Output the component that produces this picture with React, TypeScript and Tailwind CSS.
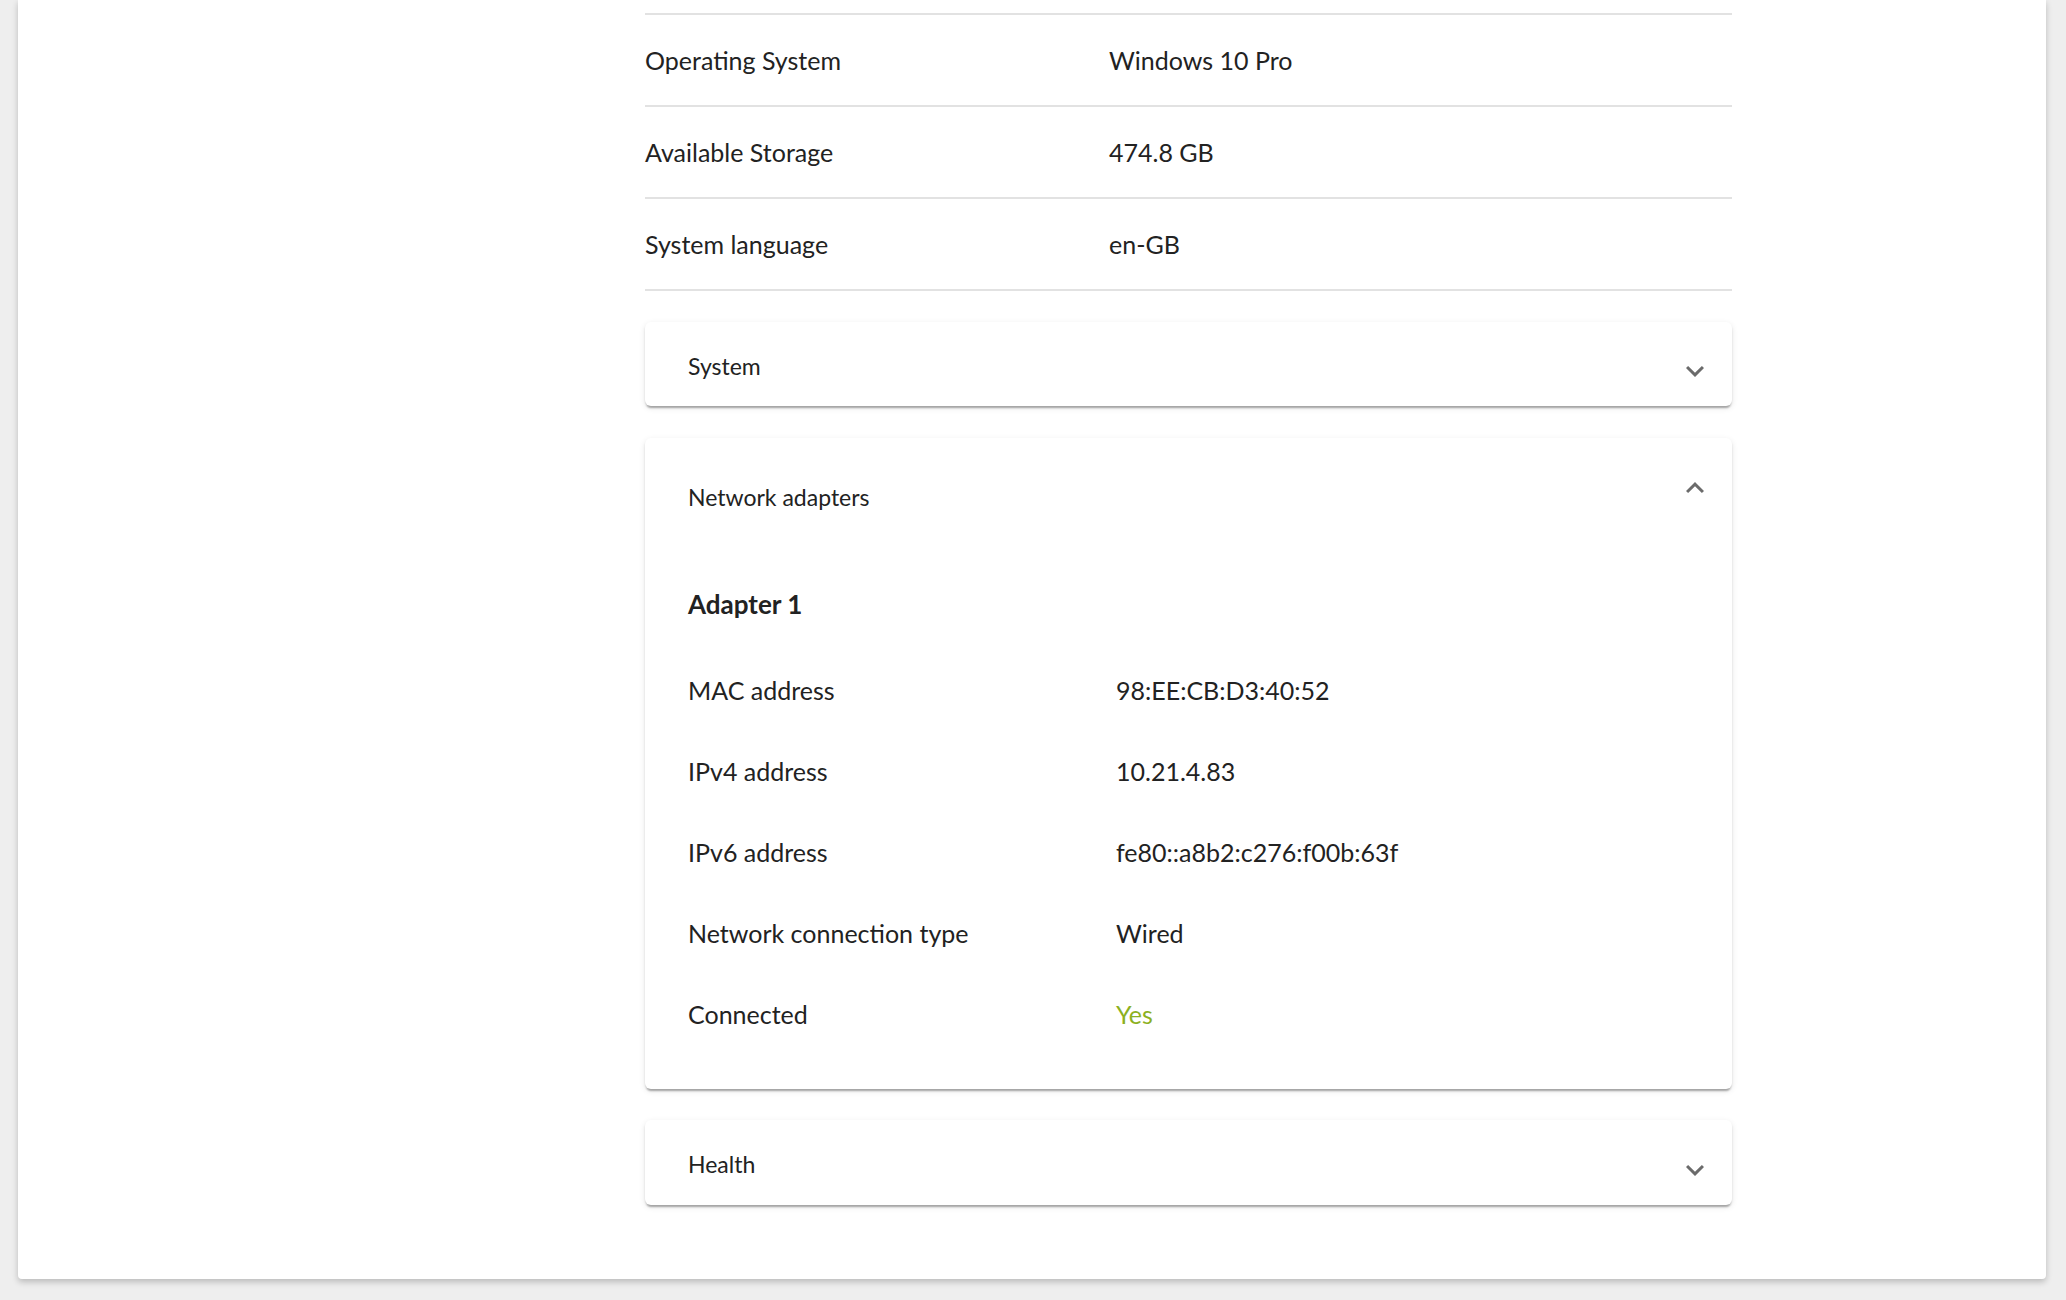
import React from "react";

const font = { fontFamily: "Lato, 'Open Sans', 'Liberation Sans', sans-serif" };

function ChevronDown() {
  return (
    <svg width="36" height="36" viewBox="0 0 24 24" className="shrink-0">
      <path fill="#6b6b6b" d="M16.59 8.59 12 13.17 7.41 8.59 6 10l6 6 6-6z" />
    </svg>
  );
}

function ChevronUp() {
  return (
    <svg width="36" height="36" viewBox="0 0 24 24" className="shrink-0">
      <path fill="#6b6b6b" d="M12 8l-6 6 1.41 1.41L12 10.83l4.59 4.58L18 14z" />
    </svg>
  );
}

const cardShadow =
  "shadow-[0_4px_2px_-2px_rgba(0,0,0,0.22),0_2px_2px_0_rgba(0,0,0,0.12),0_2px_6px_0_rgba(0,0,0,0.10)]";

function InfoRow({ label, value }: { label: string; value: string }) {
  return (
    <div className="flex h-[92px] items-center border-b-2 border-[#e2e2e2] pt-[2px]">
      <div className="w-[464px]">{label}</div>
      <div>{value}</div>
    </div>
  );
}

function AdapterRow({
  label,
  value,
  valueClass,
}: {
  label: string;
  value: string;
  valueClass?: string;
}) {
  return (
    <div className="flex h-[81px] items-center">
      <div className="w-[428px]">{label}</div>
      <div className={valueClass}>{value}</div>
    </div>
  );
}

export default function App() {
  return (
    <div
      className="h-[1300px] w-full overflow-hidden bg-[#eeeeee] pl-[18px] pr-[20px] text-[25px] text-[#222222]"
      style={font}
    >
      <div className="h-[1279px] rounded-b-[4px] bg-white shadow-[0_3px_6px_rgba(0,0,0,0.22)]">
        <div className="ml-[627px] w-[1087px]">
          <div className="h-[15px] border-b-2 border-[#e2e2e2]" />
          <InfoRow label="Operating System" value="Windows 10 Pro" />
          <InfoRow label="Available Storage" value="474.8 GB" />
          <InfoRow label="System language" value="en-GB" />

          <div
            className={`mt-[31px] flex h-[84px] items-center justify-between rounded-[6px] bg-white pl-[43px] pr-[19px] ${cardShadow}`}
          >
            <span className="mt-[4px] text-[23px]">System</span>
            <span className="mt-[14px]">
              <ChevronDown />
            </span>
          </div>

          <div className={`mt-[32px] rounded-[6px] bg-white ${cardShadow}`}>
            <div className="flex h-[118px] items-center justify-between pl-[43px] pr-[19px]">
              <span className="text-[23px]">Network adapters</span>
              <span className="mb-[19px]">
                <ChevronUp />
              </span>
            </div>
            <div className="pl-[43px] pb-[34px]">
              <div className="mt-[28px] flex h-[40px] items-center text-[26px] font-bold">
                Adapter 1
              </div>
              <div className="mt-[26px]">
                <AdapterRow label="MAC address" value="98:EE:CB:D3:40:52" />
                <AdapterRow label="IPv4 address" value="10.21.4.83" />
                <AdapterRow label="IPv6 address" value="fe80::a8b2:c276:f00b:63f" />
                <AdapterRow label="Network connection type" value="Wired" />
                <AdapterRow
                  label="Connected"
                  value="Yes"
                  valueClass="text-[#8cb11f]"
                />
              </div>
            </div>
          </div>

          <div
            className={`mt-[31px] flex h-[85px] items-center justify-between rounded-[6px] bg-white pl-[43px] pr-[19px] ${cardShadow}`}
          >
            <span className="mt-[4px] text-[23px]">Health</span>
            <span className="mt-[14px]">
              <ChevronDown />
            </span>
          </div>
        </div>
      </div>
    </div>
  );
}
